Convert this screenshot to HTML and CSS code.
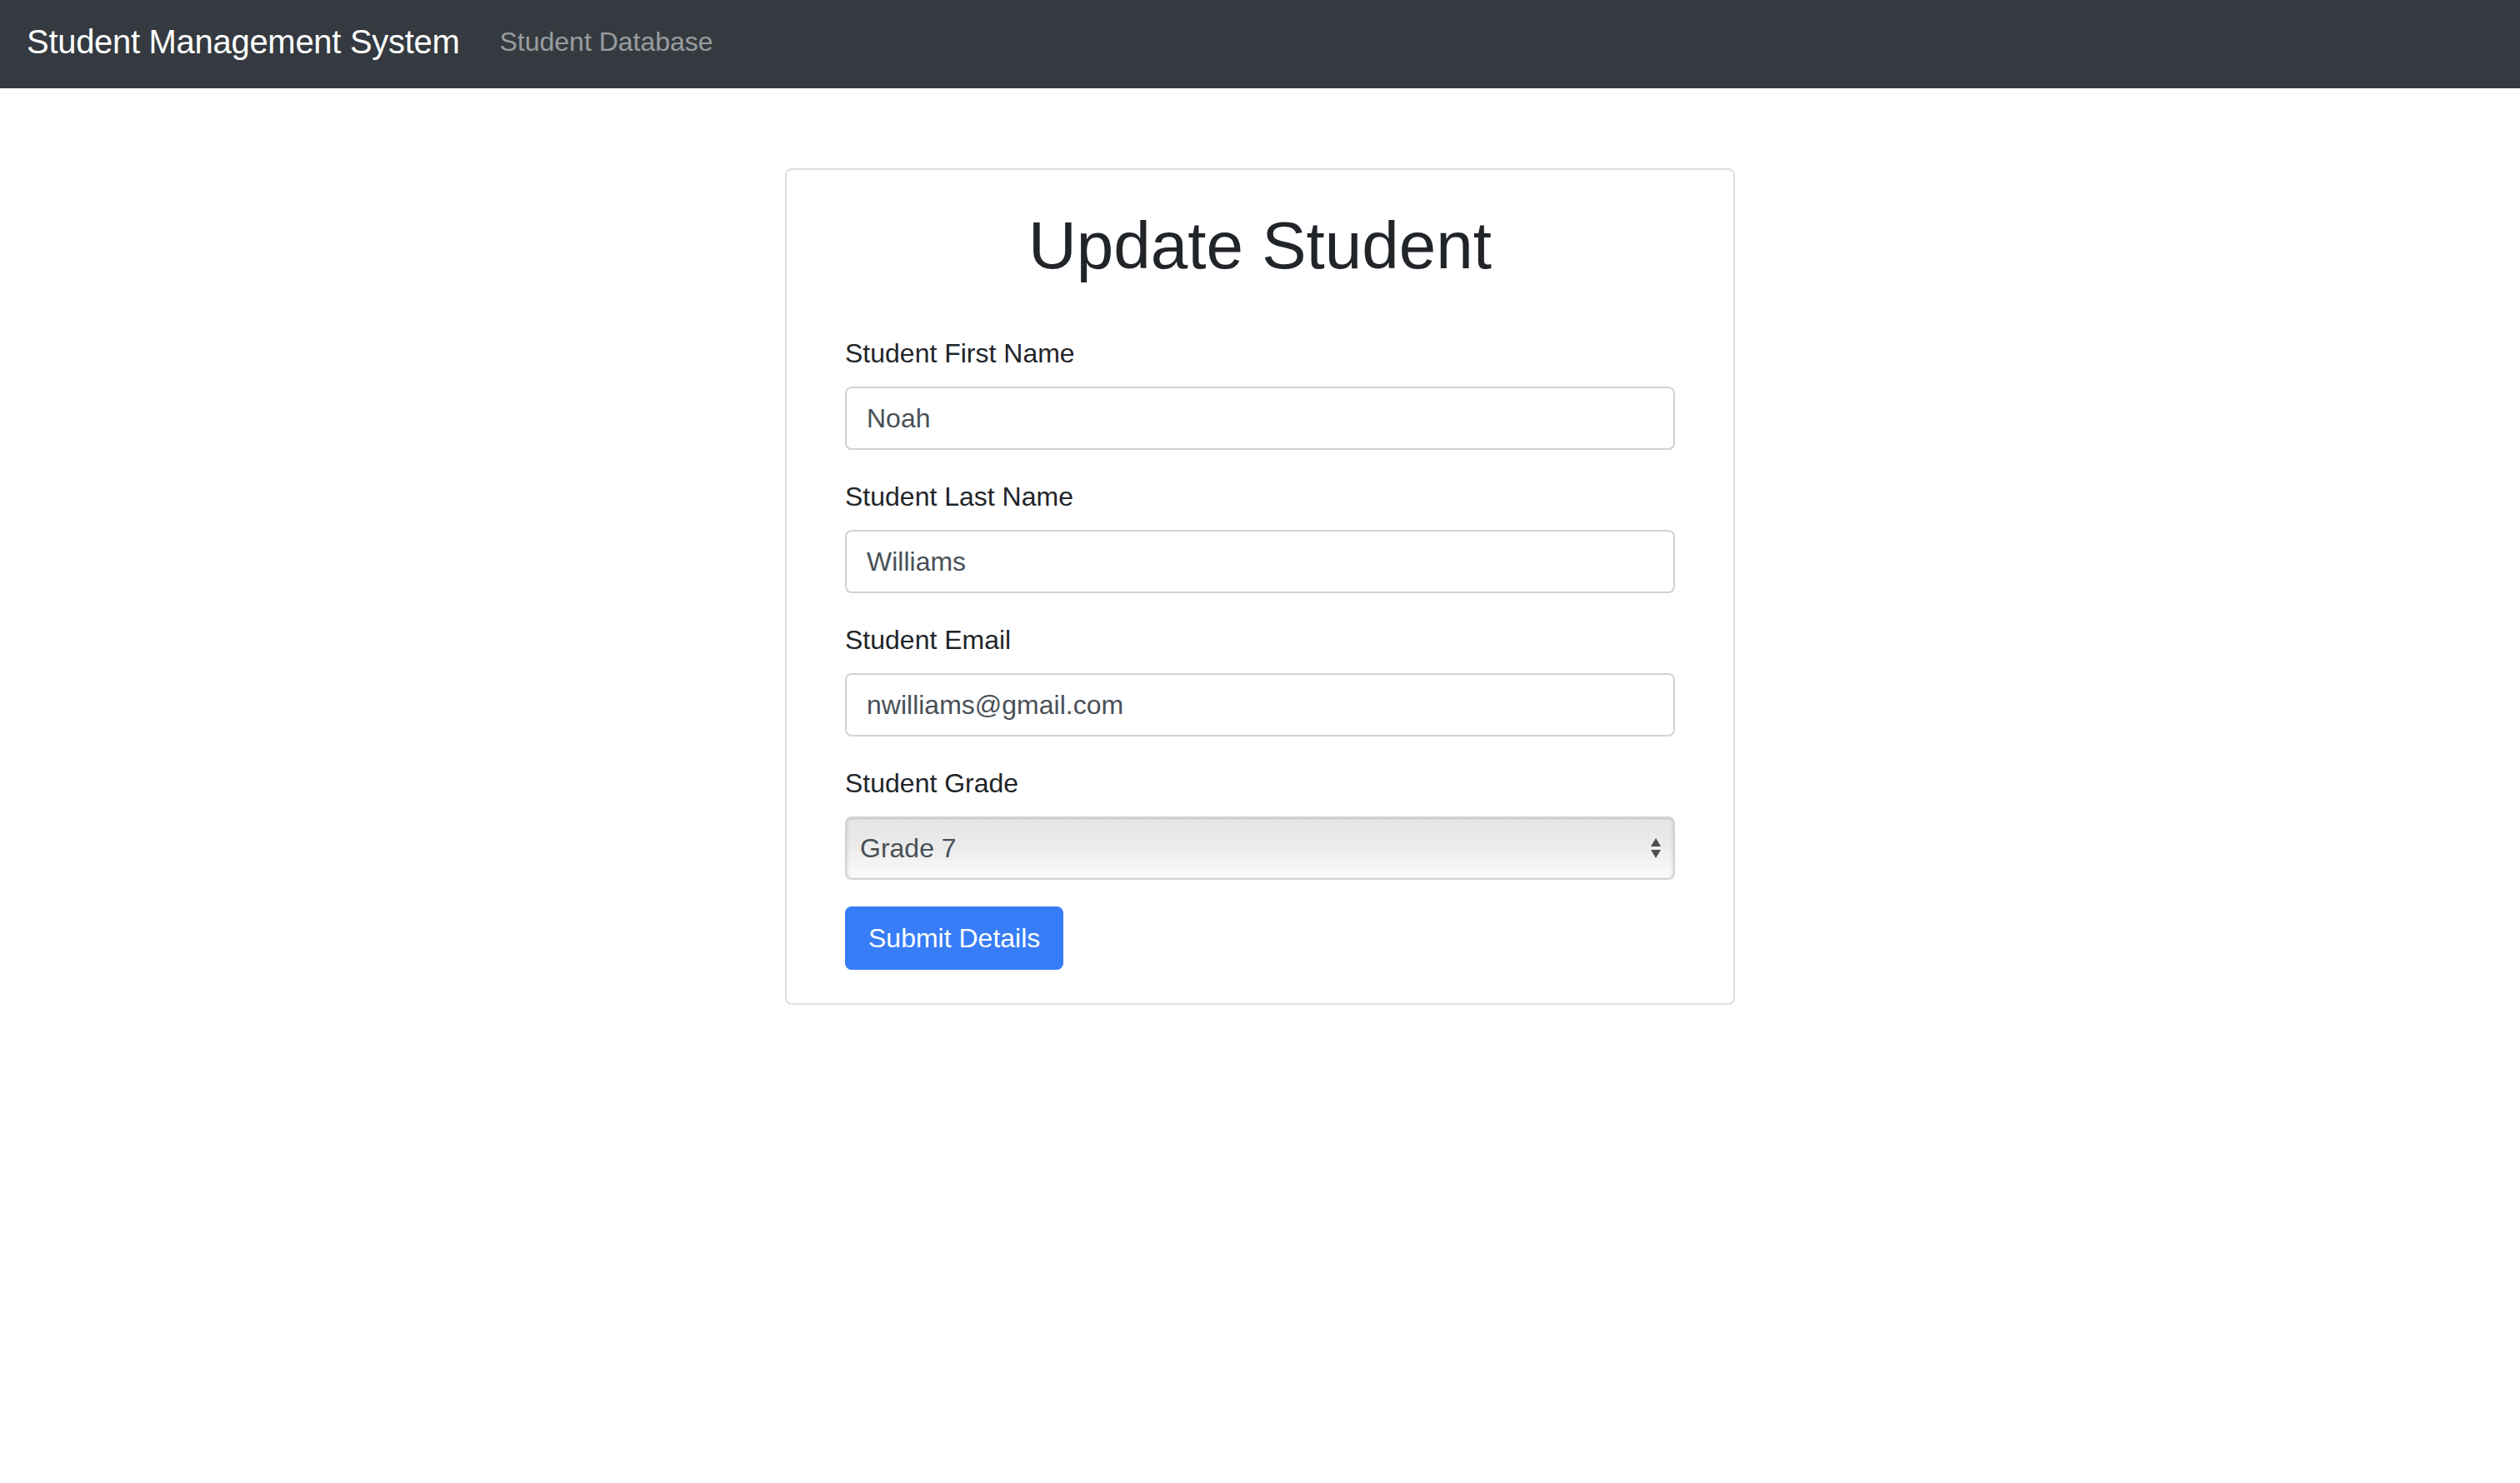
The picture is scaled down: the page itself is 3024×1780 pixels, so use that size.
FILE: index.html
```html
<!DOCTYPE html>
<html lang="en">
<head>
<meta charset="utf-8">
<title>Update Student</title>
<link rel="stylesheet" href="styles.css">
</head>
<body>
<nav class="navbar">
  <a class="brand" href="#">Student Management System</a>
  <a class="nav-link" href="#">Student Database</a>
</nav>
<main class="page">
  <section class="card">
    <h1 class="title">Update Student</h1>
    <form class="form">
      <div class="form-group">
        <label class="label" for="first">Student First Name</label>
        <input class="input" id="first" type="text" value="Noah">
      </div>
      <div class="form-group">
        <label class="label" for="last">Student Last Name</label>
        <input class="input" id="last" type="text" value="Williams">
      </div>
      <div class="form-group">
        <label class="label" for="email">Student Email</label>
        <input class="input" id="email" type="text" value="nwilliams@gmail.com">
      </div>
      <div class="form-group">
        <label class="label" for="grade">Student Grade</label>
        <div class="select-wrap">
          <select class="select" id="grade">
            <option>Grade 7</option>
          </select>
          <svg class="select-arrows" width="14" height="28" viewBox="0 0 14 28" aria-hidden="true">
            <path d="M7 2 L13 12 L1 12 Z" fill="#4a4f55"/>
            <path d="M1 16 L13 16 L7 26 Z" fill="#4a4f55"/>
          </svg>
        </div>
      </div>
      <button class="btn" type="button">Submit Details</button>
    </form>
  </section>
</main>
</body>
</html>
```

FILE: styles.css
```css
* { box-sizing: border-box; }

body {
  margin: 0;
  font-family: "Liberation Sans", Arial, sans-serif;
  font-size: 32px;
  line-height: 1.5;
  color: #212529;
  background: #ffffff;
}

.navbar {
  display: flex;
  align-items: center;
  height: 106px;
  padding: 0 32px 6px;
  background: #343a40;
}

.brand {
  font-size: 40px;
  line-height: 60px;
  letter-spacing: -0.3px;
  color: #ffffff;
  text-decoration: none;
  margin-right: 32px;
}

.nav-link {
  font-size: 32px;
  line-height: 48px;
  padding: 0 16px;
  color: rgba(255, 255, 255, 0.5);
  text-decoration: none;
}

.page {
  display: flex;
  justify-content: center;
  padding-top: 96px;
}

.card {
  width: 1140px;
  border: 2px solid #dfdfdf;
  border-radius: 8px;
  padding: 40px 70px;
  background: #fff;
}

.title {
  margin: 3px 0 57px;
  font-size: 80px;
  font-weight: 400;
  line-height: 96px;
  text-align: center;
  color: #212529;
}

.form { margin: 0; }

.form-group {
  display: flex;
  flex-direction: column;
  margin-bottom: 32px;
}

.label {
  display: block;
  line-height: 48px;
  margin-bottom: 16px;
}

.input,
.select {
  display: block;
  width: 100%;
  height: 76px;
  font-family: inherit;
  font-size: 32px;
  line-height: 48px;
  color: #495057;
  border: 2px solid #ced4da;
  border-radius: 8px;
  background: #fff;
}

.input {
  padding: 12px 24px;
}

.select-wrap {
  position: relative;
}

.select {
  -webkit-appearance: none;
  appearance: none;
  padding: 0 48px 0 16px;
  background: linear-gradient(to bottom, #e4e4e4 0%, #ebebeb 45%, #fbfbfb 100%);
  box-shadow: inset 0 1px 2px rgba(0, 0, 0, 0.08), inset -2px 0 3px rgba(0, 0, 0, 0.06), inset 2px 0 3px rgba(0, 0, 0, 0.06);
}

.select-arrows {
  position: absolute;
  right: 16px;
  top: 24px;
  pointer-events: none;
}

.btn {
  display: inline-block;
  height: 76px;
  padding: 12px 26px;
  font-family: inherit;
  font-size: 32px;
  line-height: 48px;
  color: #fff;
  background: #377df7;
  border: 2px solid #377df7;
  border-radius: 8px;
  cursor: pointer;
}
```
